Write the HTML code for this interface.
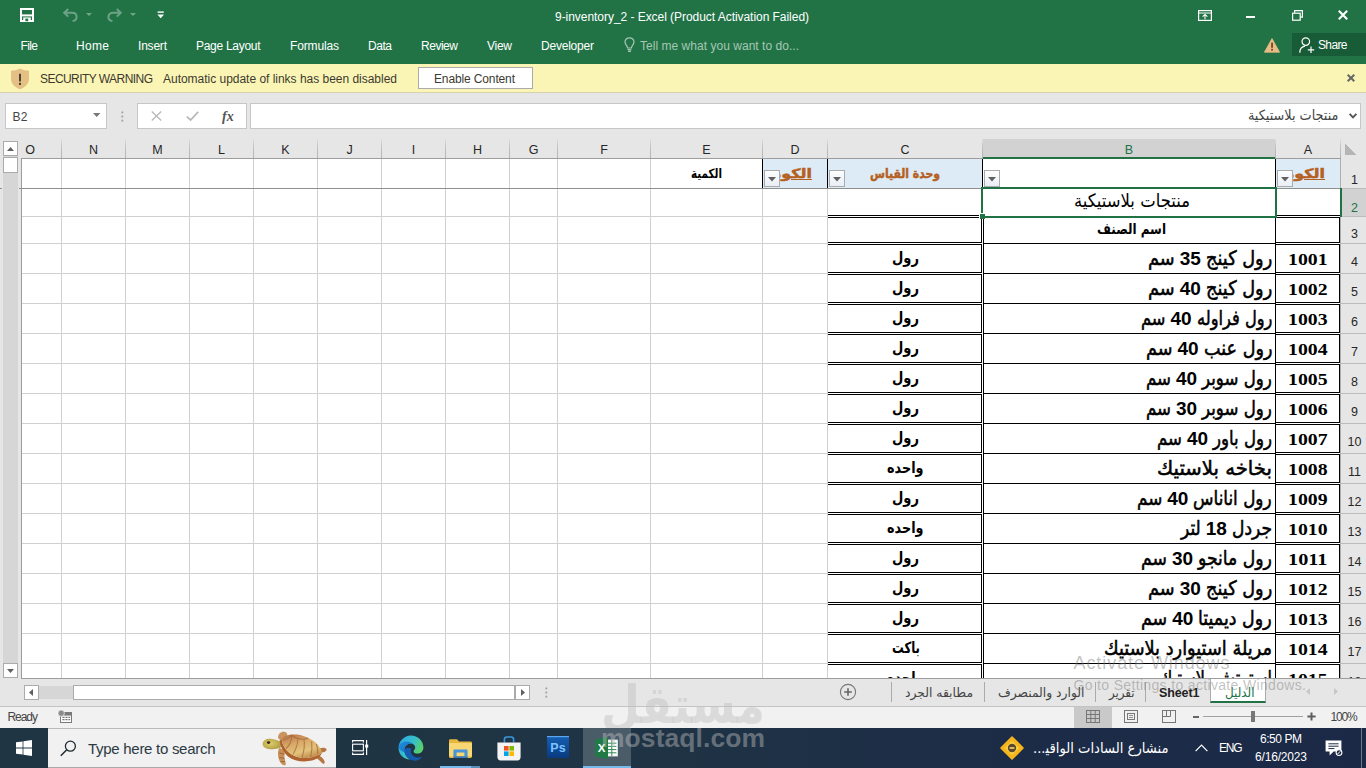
<!DOCTYPE html>
<html lang="en">
<head>
<meta charset="utf-8">
<title>9-inventory_2 - Excel (Product Activation Failed)</title>
<style>
html,body{margin:0;padding:0}
body{width:1366px;height:768px;overflow:hidden;position:relative;background:#e6e6e6;font-family:"Liberation Sans","DejaVu Sans",sans-serif}
.a{position:absolute}
.t{position:absolute;white-space:pre;margin:0;padding:0}
svg{position:absolute;overflow:visible}
#green{left:0;top:0;width:1366px;height:64px;background:#217346}
#share{left:1292px;top:33px;width:74px;height:23px;background:#185c37}
#sec{left:0;top:64px;width:1366px;height:28px;background:#fbf5b5;border-bottom:1px solid #d8d3ae}
#enable{left:418px;top:67px;width:113px;height:20px;background:#fff;border:1px solid #ababab}
.box{background:#fff;border:1px solid #c6c6c6;box-sizing:border-box}
#tabbar{left:0;top:679px;width:1366px;height:27px;background:#e6e6e6;border-bottom:1px solid #c3c3c3}
#status{left:0;top:707px;width:1366px;height:21px;background:#f1f1f1}
#task{left:0;top:728px;width:1366px;height:40px;background:linear-gradient(90deg,#1f3543 0%,#1f3444 45%,#1c2c47 75%,#1b2946 100%)}
#search{left:48px;top:728px;width:288px;height:40px;background:#f1f1f1;border-top:1px solid #b9b9b9;border-bottom:1px solid #a9a9a9;box-sizing:border-box}
</style>
</head>
<body>
<!-- ================= TITLE BAR + RIBBON TABS ================= -->
<div id="green" class="a"></div>
<div id="share" class="a"></div>
<!-- ================= SECURITY WARNING ================= -->
<div id="sec" class="a"></div>
<div id="enable" class="a"></div>
<!-- ================= FORMULA BAR ================= -->
<div class="a box" style="left:5px;top:103px;width:102px;height:26px"></div>
<div class="a box" style="left:137px;top:103px;width:110px;height:26px"></div>
<div class="a box" style="left:250px;top:103px;width:1111px;height:26px"></div>
<!-- save -->
<svg width="14" height="14" viewBox="0 0 14 14" style="left:20px;top:8px"><path d="M1 1H13V13H1Z" fill="none" stroke="#fff" stroke-width="2"/><rect x="1" y="6.4" width="12" height="2" fill="#fff"/><rect x="3.2" y="9.4" width="7.6" height="4" fill="#fff"/><rect x="5.4" y="10.6" width="2.8" height="2.6" fill="#217346"/></svg>
<!-- undo / redo (disabled) -->
<svg width="15" height="14" viewBox="0 0 15 14" style="left:63px;top:8px"><path d="M5.2 1 L1.2 4.8 L5.2 8.6 M1.6 4.8 H9 C12 4.8 13.6 6.8 13.6 9 C13.6 11.2 12 12.8 9.6 13" fill="none" stroke="#fff" stroke-opacity=".34" stroke-width="2"/></svg>
<svg width="6" height="3" viewBox="0 0 6 3" style="left:86px;top:13px"><path d="M0 0H6L3 3Z" fill="#fff" fill-opacity=".36"/></svg>
<svg width="15" height="14" viewBox="0 0 15 14" style="left:107px;top:8px"><path d="M9.8 1 L13.8 4.8 L9.8 8.6 M13.4 4.8 H6 C3 4.8 1.4 6.8 1.4 9 C1.4 11.2 3 12.8 5.4 13" fill="none" stroke="#fff" stroke-opacity=".34" stroke-width="2"/></svg>
<svg width="6" height="3" viewBox="0 0 6 3" style="left:130px;top:13px"><path d="M0 0H6L3 3Z" fill="#fff" fill-opacity=".36"/></svg>
<!-- customize QAT -->
<svg width="8" height="8" viewBox="0 0 8 8" style="left:157px;top:11px"><rect x="0.6" y="0.4" width="6.2" height="1.4" fill="#fff"/><path d="M0.4 3.6H7L3.7 7.2Z" fill="#fff"/></svg>
<!-- lightbulb -->
<svg width="11" height="16" viewBox="0 0 11 16" style="left:623.5px;top:37px"><path d="M5.5 0.8C2.9 0.8 1 2.7 1 5.1C1 6.7 1.9 7.8 2.8 8.9C3.3 9.6 3.5 10.2 3.5 11H7.5C7.5 10.2 7.7 9.6 8.2 8.9C9.1 7.8 10 6.7 10 5.1C10 2.7 8.1 0.8 5.5 0.8Z" fill="none" stroke="#a6c7b4" stroke-width="1.2"/><path d="M3.6 12.6H7.4M4 14.4H7" stroke="#a6c7b4" stroke-width="1.1"/></svg>
<!-- ribbon display options -->
<svg width="14" height="11" viewBox="0 0 14 11" style="left:1198px;top:10px"><rect x="0.6" y="0.6" width="12.8" height="9.8" fill="none" stroke="#fff" stroke-width="1.2"/><path d="M0.6 3H13.4" stroke="#fff" stroke-width="1"/><path d="M7 4.4V9.2M4.6 6.6L7 4.4L9.4 6.6" fill="none" stroke="#fff" stroke-width="1.1"/></svg>
<!-- minimize -->
<div class="a" style="left:1246px;top:16px;width:9px;height:2px;background:#fff"></div>
<!-- restore -->
<svg width="11" height="11" viewBox="0 0 11 11" style="left:1292px;top:10px"><path d="M2.6 2.8V0.6H10.4V7.2H8.2" fill="none" stroke="#fff" stroke-width="1.2"/><rect x="0.6" y="3.2" width="7.6" height="7" fill="none" stroke="#fff" stroke-width="1.2"/></svg>
<!-- close -->
<svg width="10" height="10" viewBox="0 0 10 10" style="left:1338px;top:10px"><path d="M0.8 0.8L9.2 9.2M9.2 0.8L0.8 9.2" stroke="#fff" stroke-width="2.1"/></svg>
<!-- warning triangle -->
<svg width="16" height="15" viewBox="0 0 16 15" style="left:1264px;top:38px"><path d="M8 0.6L15.6 14.2H0.4Z" fill="#e6bd86" stroke="#e6bd86" stroke-width="0.8" stroke-linejoin="round"/><rect x="7.2" y="4.6" width="1.7" height="5.2" fill="#7a3b1e"/><rect x="7.2" y="10.8" width="1.7" height="1.8" fill="#7a3b1e"/></svg>
<!-- share person -->
<svg width="16" height="17" viewBox="0 0 16 17" style="left:1298.5px;top:36.5px"><circle cx="6.8" cy="4.6" r="3.8" fill="none" stroke="#fff" stroke-width="1.2"/><path d="M0.8 15.8C0.8 11.8 3.2 9.6 6 9.2" fill="none" stroke="#fff" stroke-width="1.2"/><path d="M12 9.6V16M8.8 12.8H15.2" stroke="#fff" stroke-width="1.2"/></svg>
<!-- security shield -->
<svg width="20" height="22" viewBox="0 0 20 22" style="left:10px;top:68px"><path d="M10 0.6C7 2.2 4 2.8 1 2.8V10.4C1 15.6 5 19.4 10 21.2C15 19.4 19 15.6 19 10.4V2.8C16 2.8 13 2.2 10 0.6Z" fill="#e4c084"/><rect x="9" y="5.8" width="2" height="7.6" fill="#4f4336"/><rect x="9" y="14.8" width="2" height="2.2" fill="#4f4336"/></svg>
<!-- security close -->
<svg width="8" height="8" viewBox="0 0 8 8" style="left:1347px;top:74px"><path d="M0.7 0.7L7.3 7.3M7.3 0.7L0.7 7.3" stroke="#666" stroke-width="2"/></svg>
<!-- name box arrow -->
<svg width="8" height="4" viewBox="0 0 8 4" style="left:93px;top:113px"><path d="M0 0H7.4L3.7 4Z" fill="#777"/></svg>
<!-- grip dots -->
<svg width="3" height="11" viewBox="0 0 3 11" style="left:121px;top:110.5px"><rect x="0.4" y="0.5" width="1.8" height="1.8" fill="#a0a0a0"/><rect x="0.4" y="4.6" width="1.8" height="1.8" fill="#a0a0a0"/><rect x="0.4" y="8.7" width="1.8" height="1.8" fill="#a0a0a0"/></svg>
<!-- cancel / enter -->
<svg width="11" height="10" viewBox="0 0 11 10" style="left:150.5px;top:111px"><path d="M0.8 0.6L10.2 9.4M10.2 0.6L0.8 9.4" stroke="#b9b9b9" stroke-width="1.4"/></svg>
<svg width="13" height="10" viewBox="0 0 13 10" style="left:186px;top:111px"><path d="M0.8 5.6L4.6 9L12.2 0.8" fill="none" stroke="#b9b9b9" stroke-width="1.8"/></svg>
<!-- formula expand chevron -->
<svg width="8" height="6" viewBox="0 0 8 6" style="left:1349px;top:113px"><path d="M0.6 0.8L4 4.4L7.4 0.8" fill="none" stroke="#555" stroke-width="1.9"/></svg>

<!-- ================= GRID ================= -->
<div class="a" style="left:3px;top:141px;width:15px;height:537px;background:#d6d6d6"></div><div class="a box" style="left:3px;top:141px;width:15px;height:15px;border-color:#ababab"></div><svg width="7" height="4" viewBox="0 0 7 4" style="left:7px;top:147px"><path d="M0 4H7L3.5 0Z" fill="#606060"/></svg><div class="a box" style="left:3px;top:157px;width:15px;height:16px;border-color:#ababab"></div><div class="a box" style="left:3px;top:663px;width:15px;height:15px;border-color:#ababab"></div><svg width="7" height="4" viewBox="0 0 7 4" style="left:7px;top:669px"><path d="M0 0H7L3.5 4Z" fill="#606060"/></svg>
<svg width="1366" height="768" viewBox="0 0 1366 768" shape-rendering="crispEdges" style="left:0;top:0">
<defs><linearGradient id="hs" x1="0" y1="0" x2="0" y2="1"><stop offset="0" stop-color="#c0c0c0" stop-opacity="0"/><stop offset="0.45" stop-color="#c0c0c0" stop-opacity="1"/><stop offset="1" stop-color="#b4b4b4"/></linearGradient></defs>
<rect x="983" y="139" width="292" height="19" fill="#d2d2d2"/>
<rect x="22" y="159" width="1318" height="519" fill="#ffffff"/>
<rect x="1341" y="189" width="25" height="27" fill="#d2d2d2"/>
<rect x="763" y="159" width="64" height="29" fill="#ddebf7"/>
<rect x="828" y="159" width="154" height="29" fill="#ddebf7"/>
<rect x="1276" y="159" width="64" height="29" fill="#ddebf7"/>
<rect x="61" y="159" width="1" height="519" fill="#d0d0d0"/>
<rect x="125" y="159" width="1" height="519" fill="#d0d0d0"/>
<rect x="189" y="159" width="1" height="519" fill="#d0d0d0"/>
<rect x="253" y="159" width="1" height="519" fill="#d0d0d0"/>
<rect x="317" y="159" width="1" height="519" fill="#d0d0d0"/>
<rect x="381" y="159" width="1" height="519" fill="#d0d0d0"/>
<rect x="445" y="159" width="1" height="519" fill="#d0d0d0"/>
<rect x="509" y="159" width="1" height="519" fill="#d0d0d0"/>
<rect x="557" y="159" width="1" height="519" fill="#d0d0d0"/>
<rect x="650" y="159" width="1" height="519" fill="#d0d0d0"/>
<rect x="762" y="159" width="1" height="519" fill="#d0d0d0"/>
<rect x="827" y="159" width="1" height="519" fill="#d0d0d0"/>
<rect x="22" y="216" width="806" height="1" fill="#d0d0d0"/>
<rect x="22" y="243" width="806" height="1" fill="#d0d0d0"/>
<rect x="22" y="273" width="806" height="1" fill="#d0d0d0"/>
<rect x="22" y="303" width="806" height="1" fill="#d0d0d0"/>
<rect x="22" y="333" width="806" height="1" fill="#d0d0d0"/>
<rect x="22" y="363" width="806" height="1" fill="#d0d0d0"/>
<rect x="22" y="393" width="806" height="1" fill="#d0d0d0"/>
<rect x="22" y="423" width="806" height="1" fill="#d0d0d0"/>
<rect x="22" y="453" width="806" height="1" fill="#d0d0d0"/>
<rect x="22" y="483" width="806" height="1" fill="#d0d0d0"/>
<rect x="22" y="513" width="806" height="1" fill="#d0d0d0"/>
<rect x="22" y="543" width="806" height="1" fill="#d0d0d0"/>
<rect x="22" y="573" width="806" height="1" fill="#d0d0d0"/>
<rect x="22" y="603" width="806" height="1" fill="#d0d0d0"/>
<rect x="22" y="633" width="806" height="1" fill="#d0d0d0"/>
<rect x="22" y="663" width="806" height="1" fill="#d0d0d0"/>
<rect x="61" y="138" width="1" height="20" fill="url(#hs)"/>
<rect x="125" y="138" width="1" height="20" fill="url(#hs)"/>
<rect x="189" y="138" width="1" height="20" fill="url(#hs)"/>
<rect x="253" y="138" width="1" height="20" fill="url(#hs)"/>
<rect x="317" y="138" width="1" height="20" fill="url(#hs)"/>
<rect x="381" y="138" width="1" height="20" fill="url(#hs)"/>
<rect x="445" y="138" width="1" height="20" fill="url(#hs)"/>
<rect x="509" y="138" width="1" height="20" fill="url(#hs)"/>
<rect x="557" y="138" width="1" height="20" fill="url(#hs)"/>
<rect x="650" y="138" width="1" height="20" fill="url(#hs)"/>
<rect x="762" y="138" width="1" height="20" fill="url(#hs)"/>
<rect x="827" y="138" width="1" height="20" fill="url(#hs)"/>
<rect x="982" y="138" width="1" height="20" fill="url(#hs)"/>
<rect x="1275" y="138" width="1" height="20" fill="url(#hs)"/>
<rect x="1340" y="138" width="1" height="20" fill="url(#hs)"/>
<rect x="1341" y="188" width="25" height="1" fill="#bcbcbc"/>
<rect x="1341" y="216" width="25" height="1" fill="#bcbcbc"/>
<rect x="1341" y="243" width="25" height="1" fill="#bcbcbc"/>
<rect x="1341" y="273" width="25" height="1" fill="#bcbcbc"/>
<rect x="1341" y="303" width="25" height="1" fill="#bcbcbc"/>
<rect x="1341" y="333" width="25" height="1" fill="#bcbcbc"/>
<rect x="1341" y="363" width="25" height="1" fill="#bcbcbc"/>
<rect x="1341" y="393" width="25" height="1" fill="#bcbcbc"/>
<rect x="1341" y="423" width="25" height="1" fill="#bcbcbc"/>
<rect x="1341" y="453" width="25" height="1" fill="#bcbcbc"/>
<rect x="1341" y="483" width="25" height="1" fill="#bcbcbc"/>
<rect x="1341" y="513" width="25" height="1" fill="#bcbcbc"/>
<rect x="1341" y="543" width="25" height="1" fill="#bcbcbc"/>
<rect x="1341" y="573" width="25" height="1" fill="#bcbcbc"/>
<rect x="1341" y="603" width="25" height="1" fill="#bcbcbc"/>
<rect x="1341" y="633" width="25" height="1" fill="#bcbcbc"/>
<rect x="1341" y="663" width="25" height="1" fill="#bcbcbc"/>
<rect x="1340" y="159" width="1" height="519" fill="#b0b0b0"/>
<rect x="21" y="158" width="1320" height="1" fill="#9d9d9d"/>
<rect x="21" y="158" width="1" height="520" fill="#9d9d9d"/>
<rect x="21" y="678" width="1345" height="1" fill="#9d9d9d"/>
<rect x="19" y="188" width="1321" height="1" fill="#8f8f8f"/>
<rect x="0" y="188" width="2" height="1" fill="#8f8f8f"/>
<rect x="762" y="159" width="1" height="29" fill="#000000"/>
<rect x="827" y="159" width="1" height="29" fill="#000000"/>
<rect x="982" y="159" width="1" height="29" fill="#000000"/>
<rect x="1275" y="159" width="1" height="29" fill="#000000"/>
<rect x="828" y="215" width="153" height="1" fill="#000000"/>
<rect x="828" y="217" width="153" height="1" fill="#000000"/>
<rect x="1276" y="215" width="64" height="1" fill="#000000"/>
<rect x="1276" y="217" width="64" height="1" fill="#000000"/>
<rect x="828" y="216" width="153" height="1" fill="#fff"/>
<rect x="1276" y="216" width="64" height="1" fill="#fff"/>
<rect x="828" y="242" width="153" height="1" fill="#000000"/>
<rect x="828" y="244" width="153" height="1" fill="#000000"/>
<rect x="1276" y="242" width="64" height="1" fill="#000000"/>
<rect x="1276" y="244" width="64" height="1" fill="#000000"/>
<rect x="984" y="243" width="291" height="1" fill="#000000"/>
<rect x="828" y="243" width="153" height="1" fill="#fff"/>
<rect x="1276" y="243" width="64" height="1" fill="#fff"/>
<rect x="828" y="272" width="153" height="1" fill="#000000"/>
<rect x="828" y="274" width="153" height="1" fill="#000000"/>
<rect x="1276" y="272" width="64" height="1" fill="#000000"/>
<rect x="1276" y="274" width="64" height="1" fill="#000000"/>
<rect x="984" y="273" width="291" height="1" fill="#000000"/>
<rect x="828" y="273" width="153" height="1" fill="#fff"/>
<rect x="1276" y="273" width="64" height="1" fill="#fff"/>
<rect x="828" y="302" width="153" height="1" fill="#000000"/>
<rect x="828" y="304" width="153" height="1" fill="#000000"/>
<rect x="1276" y="302" width="64" height="1" fill="#000000"/>
<rect x="1276" y="304" width="64" height="1" fill="#000000"/>
<rect x="984" y="303" width="291" height="1" fill="#000000"/>
<rect x="828" y="303" width="153" height="1" fill="#fff"/>
<rect x="1276" y="303" width="64" height="1" fill="#fff"/>
<rect x="828" y="332" width="153" height="1" fill="#000000"/>
<rect x="828" y="334" width="153" height="1" fill="#000000"/>
<rect x="1276" y="332" width="64" height="1" fill="#000000"/>
<rect x="1276" y="334" width="64" height="1" fill="#000000"/>
<rect x="984" y="333" width="291" height="1" fill="#000000"/>
<rect x="828" y="333" width="153" height="1" fill="#fff"/>
<rect x="1276" y="333" width="64" height="1" fill="#fff"/>
<rect x="828" y="362" width="153" height="1" fill="#000000"/>
<rect x="828" y="364" width="153" height="1" fill="#000000"/>
<rect x="1276" y="362" width="64" height="1" fill="#000000"/>
<rect x="1276" y="364" width="64" height="1" fill="#000000"/>
<rect x="984" y="363" width="291" height="1" fill="#000000"/>
<rect x="828" y="363" width="153" height="1" fill="#fff"/>
<rect x="1276" y="363" width="64" height="1" fill="#fff"/>
<rect x="828" y="392" width="153" height="1" fill="#000000"/>
<rect x="828" y="394" width="153" height="1" fill="#000000"/>
<rect x="1276" y="392" width="64" height="1" fill="#000000"/>
<rect x="1276" y="394" width="64" height="1" fill="#000000"/>
<rect x="984" y="393" width="291" height="1" fill="#000000"/>
<rect x="828" y="393" width="153" height="1" fill="#fff"/>
<rect x="1276" y="393" width="64" height="1" fill="#fff"/>
<rect x="828" y="422" width="153" height="1" fill="#000000"/>
<rect x="828" y="424" width="153" height="1" fill="#000000"/>
<rect x="1276" y="422" width="64" height="1" fill="#000000"/>
<rect x="1276" y="424" width="64" height="1" fill="#000000"/>
<rect x="984" y="423" width="291" height="1" fill="#000000"/>
<rect x="828" y="423" width="153" height="1" fill="#fff"/>
<rect x="1276" y="423" width="64" height="1" fill="#fff"/>
<rect x="828" y="452" width="153" height="1" fill="#000000"/>
<rect x="828" y="454" width="153" height="1" fill="#000000"/>
<rect x="1276" y="452" width="64" height="1" fill="#000000"/>
<rect x="1276" y="454" width="64" height="1" fill="#000000"/>
<rect x="984" y="453" width="291" height="1" fill="#000000"/>
<rect x="828" y="453" width="153" height="1" fill="#fff"/>
<rect x="1276" y="453" width="64" height="1" fill="#fff"/>
<rect x="828" y="482" width="153" height="1" fill="#000000"/>
<rect x="828" y="484" width="153" height="1" fill="#000000"/>
<rect x="1276" y="482" width="64" height="1" fill="#000000"/>
<rect x="1276" y="484" width="64" height="1" fill="#000000"/>
<rect x="984" y="483" width="291" height="1" fill="#000000"/>
<rect x="828" y="483" width="153" height="1" fill="#fff"/>
<rect x="1276" y="483" width="64" height="1" fill="#fff"/>
<rect x="828" y="512" width="153" height="1" fill="#000000"/>
<rect x="828" y="514" width="153" height="1" fill="#000000"/>
<rect x="1276" y="512" width="64" height="1" fill="#000000"/>
<rect x="1276" y="514" width="64" height="1" fill="#000000"/>
<rect x="984" y="513" width="291" height="1" fill="#000000"/>
<rect x="828" y="513" width="153" height="1" fill="#fff"/>
<rect x="1276" y="513" width="64" height="1" fill="#fff"/>
<rect x="828" y="542" width="153" height="1" fill="#000000"/>
<rect x="828" y="544" width="153" height="1" fill="#000000"/>
<rect x="1276" y="542" width="64" height="1" fill="#000000"/>
<rect x="1276" y="544" width="64" height="1" fill="#000000"/>
<rect x="984" y="543" width="291" height="1" fill="#000000"/>
<rect x="828" y="543" width="153" height="1" fill="#fff"/>
<rect x="1276" y="543" width="64" height="1" fill="#fff"/>
<rect x="828" y="572" width="153" height="1" fill="#000000"/>
<rect x="828" y="574" width="153" height="1" fill="#000000"/>
<rect x="1276" y="572" width="64" height="1" fill="#000000"/>
<rect x="1276" y="574" width="64" height="1" fill="#000000"/>
<rect x="984" y="573" width="291" height="1" fill="#000000"/>
<rect x="828" y="573" width="153" height="1" fill="#fff"/>
<rect x="1276" y="573" width="64" height="1" fill="#fff"/>
<rect x="828" y="602" width="153" height="1" fill="#000000"/>
<rect x="828" y="604" width="153" height="1" fill="#000000"/>
<rect x="1276" y="602" width="64" height="1" fill="#000000"/>
<rect x="1276" y="604" width="64" height="1" fill="#000000"/>
<rect x="984" y="603" width="291" height="1" fill="#000000"/>
<rect x="828" y="603" width="153" height="1" fill="#fff"/>
<rect x="1276" y="603" width="64" height="1" fill="#fff"/>
<rect x="828" y="632" width="153" height="1" fill="#000000"/>
<rect x="828" y="634" width="153" height="1" fill="#000000"/>
<rect x="1276" y="632" width="64" height="1" fill="#000000"/>
<rect x="1276" y="634" width="64" height="1" fill="#000000"/>
<rect x="984" y="633" width="291" height="1" fill="#000000"/>
<rect x="828" y="633" width="153" height="1" fill="#fff"/>
<rect x="1276" y="633" width="64" height="1" fill="#fff"/>
<rect x="828" y="662" width="153" height="1" fill="#000000"/>
<rect x="828" y="664" width="153" height="1" fill="#000000"/>
<rect x="1276" y="662" width="64" height="1" fill="#000000"/>
<rect x="1276" y="664" width="64" height="1" fill="#000000"/>
<rect x="984" y="663" width="291" height="1" fill="#000000"/>
<rect x="828" y="663" width="153" height="1" fill="#fff"/>
<rect x="1276" y="663" width="64" height="1" fill="#fff"/>
<rect x="981" y="217" width="1" height="461" fill="#000000"/>
<rect x="983" y="217" width="1" height="461" fill="#000000"/>
<rect x="982" y="217" width="1" height="461" fill="#fff"/>
<rect x="1275" y="217" width="1" height="461" fill="#000000"/>
<rect x="1339" y="217" width="1" height="461" fill="#000000"/>
<rect x="981" y="216" width="1" height="1" fill="#fff"/>
<rect x="1339" y="216" width="1" height="1" fill="#fff"/>
<rect x="981" y="243" width="1" height="1" fill="#fff"/>
<rect x="1339" y="243" width="1" height="1" fill="#fff"/>
<rect x="981" y="273" width="1" height="1" fill="#fff"/>
<rect x="1339" y="273" width="1" height="1" fill="#fff"/>
<rect x="981" y="303" width="1" height="1" fill="#fff"/>
<rect x="1339" y="303" width="1" height="1" fill="#fff"/>
<rect x="981" y="333" width="1" height="1" fill="#fff"/>
<rect x="1339" y="333" width="1" height="1" fill="#fff"/>
<rect x="981" y="363" width="1" height="1" fill="#fff"/>
<rect x="1339" y="363" width="1" height="1" fill="#fff"/>
<rect x="981" y="393" width="1" height="1" fill="#fff"/>
<rect x="1339" y="393" width="1" height="1" fill="#fff"/>
<rect x="981" y="423" width="1" height="1" fill="#fff"/>
<rect x="1339" y="423" width="1" height="1" fill="#fff"/>
<rect x="981" y="453" width="1" height="1" fill="#fff"/>
<rect x="1339" y="453" width="1" height="1" fill="#fff"/>
<rect x="981" y="483" width="1" height="1" fill="#fff"/>
<rect x="1339" y="483" width="1" height="1" fill="#fff"/>
<rect x="981" y="513" width="1" height="1" fill="#fff"/>
<rect x="1339" y="513" width="1" height="1" fill="#fff"/>
<rect x="981" y="543" width="1" height="1" fill="#fff"/>
<rect x="1339" y="543" width="1" height="1" fill="#fff"/>
<rect x="981" y="573" width="1" height="1" fill="#fff"/>
<rect x="1339" y="573" width="1" height="1" fill="#fff"/>
<rect x="981" y="603" width="1" height="1" fill="#fff"/>
<rect x="1339" y="603" width="1" height="1" fill="#fff"/>
<rect x="981" y="633" width="1" height="1" fill="#fff"/>
<rect x="1339" y="633" width="1" height="1" fill="#fff"/>
<rect x="981" y="663" width="1" height="1" fill="#fff"/>
<rect x="1339" y="663" width="1" height="1" fill="#fff"/>
<rect x="983" y="157" width="292" height="2" fill="#217346"/>
<rect x="981" y="187" width="296" height="2" fill="#217346"/>
<rect x="981" y="216" width="296" height="2" fill="#217346"/>
<rect x="981" y="187" width="2" height="31" fill="#217346"/>
<rect x="1275" y="187" width="2" height="31" fill="#217346"/>
<rect x="1340" y="188" width="2" height="29" fill="#217346"/>
<rect x="979" y="213" width="6" height="6" fill="#fff"/>
<rect x="980" y="214" width="5" height="5" fill="#217346"/>
<path d="M1345 144 L1345 155 L1356 155 Z" fill="#b5b5b5"/>
</svg>
<div class="a" style="left:0;top:0;width:1366px;height:678px;overflow:hidden">
<div class="t" style='top:144px;font-family:"Liberation Sans","DejaVu Sans",sans-serif;font-size:12.5px;line-height:12.5px;color:#262626;left:25.13px;'>O</div>
<div class="t" style='top:144px;font-family:"Liberation Sans","DejaVu Sans",sans-serif;font-size:12.5px;line-height:12.5px;color:#262626;left:88.98px;'>N</div>
<div class="t" style='top:144px;font-family:"Liberation Sans","DejaVu Sans",sans-serif;font-size:12.5px;line-height:12.5px;color:#262626;left:152.29px;'>M</div>
<div class="t" style='top:144px;font-family:"Liberation Sans","DejaVu Sans",sans-serif;font-size:12.5px;line-height:12.5px;color:#262626;left:218.02px;'>L</div>
<div class="t" style='top:144px;font-family:"Liberation Sans","DejaVu Sans",sans-serif;font-size:12.5px;line-height:12.5px;color:#262626;left:281.33px;'>K</div>
<div class="t" style='top:144px;font-family:"Liberation Sans","DejaVu Sans",sans-serif;font-size:12.5px;line-height:12.5px;color:#262626;left:346.38px;'>J</div>
<div class="t" style='top:144px;font-family:"Liberation Sans","DejaVu Sans",sans-serif;font-size:12.5px;line-height:12.5px;color:#262626;left:411.76px;'>I</div>
<div class="t" style='top:144px;font-family:"Liberation Sans","DejaVu Sans",sans-serif;font-size:12.5px;line-height:12.5px;color:#262626;left:472.98px;'>H</div>
<div class="t" style='top:144px;font-family:"Liberation Sans","DejaVu Sans",sans-serif;font-size:12.5px;line-height:12.5px;color:#262626;left:528.63px;'>G</div>
<div class="t" style='top:144px;font-family:"Liberation Sans","DejaVu Sans",sans-serif;font-size:12.5px;line-height:12.5px;color:#262626;left:600.18px;'>F</div>
<div class="t" style='top:144px;font-family:"Liberation Sans","DejaVu Sans",sans-serif;font-size:12.5px;line-height:12.5px;color:#262626;left:702.33px;'>E</div>
<div class="t" style='top:144px;font-family:"Liberation Sans","DejaVu Sans",sans-serif;font-size:12.5px;line-height:12.5px;color:#262626;left:790.48px;'>D</div>
<div class="t" style='top:144px;font-family:"Liberation Sans","DejaVu Sans",sans-serif;font-size:12.5px;line-height:12.5px;color:#262626;left:900.48px;'>C</div>
<div class="t" style='top:144px;font-family:"Liberation Sans","DejaVu Sans",sans-serif;font-size:12.5px;line-height:12.5px;color:#217346;left:1124.83px;'>B</div>
<div class="t" style='top:144px;font-family:"Liberation Sans","DejaVu Sans",sans-serif;font-size:12.5px;line-height:12.5px;color:#262626;left:1303.83px;'>A</div>
<div class="t" style='top:174px;font-family:"Liberation Sans","DejaVu Sans",sans-serif;font-size:12.5px;line-height:12.5px;color:#262626;left:1351.02px;'>1</div>
<div class="t" style='top:202px;font-family:"Liberation Sans","DejaVu Sans",sans-serif;font-size:12.5px;line-height:12.5px;color:#217346;left:1351.02px;'>2</div>
<div class="t" style='top:228px;font-family:"Liberation Sans","DejaVu Sans",sans-serif;font-size:12.5px;line-height:12.5px;color:#262626;left:1351.02px;'>3</div>
<div class="t" style='top:256px;font-family:"Liberation Sans","DejaVu Sans",sans-serif;font-size:12.5px;line-height:12.5px;color:#262626;left:1351.02px;'>4</div>
<div class="t" style='top:286px;font-family:"Liberation Sans","DejaVu Sans",sans-serif;font-size:12.5px;line-height:12.5px;color:#262626;left:1351.02px;'>5</div>
<div class="t" style='top:316px;font-family:"Liberation Sans","DejaVu Sans",sans-serif;font-size:12.5px;line-height:12.5px;color:#262626;left:1351.02px;'>6</div>
<div class="t" style='top:346px;font-family:"Liberation Sans","DejaVu Sans",sans-serif;font-size:12.5px;line-height:12.5px;color:#262626;left:1351.02px;'>7</div>
<div class="t" style='top:376px;font-family:"Liberation Sans","DejaVu Sans",sans-serif;font-size:12.5px;line-height:12.5px;color:#262626;left:1351.02px;'>8</div>
<div class="t" style='top:406px;font-family:"Liberation Sans","DejaVu Sans",sans-serif;font-size:12.5px;line-height:12.5px;color:#262626;left:1351.02px;'>9</div>
<div class="t" style='top:436px;font-family:"Liberation Sans","DejaVu Sans",sans-serif;font-size:12.5px;line-height:12.5px;color:#262626;left:1347.55px;'>10</div>
<div class="t" style='top:466px;font-family:"Liberation Sans","DejaVu Sans",sans-serif;font-size:12.5px;line-height:12.5px;color:#262626;left:1348.01px;'>11</div>
<div class="t" style='top:496px;font-family:"Liberation Sans","DejaVu Sans",sans-serif;font-size:12.5px;line-height:12.5px;color:#262626;left:1347.55px;'>12</div>
<div class="t" style='top:526px;font-family:"Liberation Sans","DejaVu Sans",sans-serif;font-size:12.5px;line-height:12.5px;color:#262626;left:1347.55px;'>13</div>
<div class="t" style='top:556px;font-family:"Liberation Sans","DejaVu Sans",sans-serif;font-size:12.5px;line-height:12.5px;color:#262626;left:1347.55px;'>14</div>
<div class="t" style='top:586px;font-family:"Liberation Sans","DejaVu Sans",sans-serif;font-size:12.5px;line-height:12.5px;color:#262626;left:1347.55px;'>15</div>
<div class="t" style='top:616px;font-family:"Liberation Sans","DejaVu Sans",sans-serif;font-size:12.5px;line-height:12.5px;color:#262626;left:1347.55px;'>16</div>
<div class="t" style='top:646px;font-family:"Liberation Sans","DejaVu Sans",sans-serif;font-size:12.5px;line-height:12.5px;color:#262626;left:1347.55px;'>17</div>
<div class="t" style='top:676px;font-family:"Liberation Sans","DejaVu Sans",sans-serif;font-size:12.5px;line-height:12.5px;color:#262626;left:1347.55px;'>18</div>
<div class="t" dir="rtl" style='top:167px;font-family:"DejaVu Sans","Liberation Sans",sans-serif;font-size:13px;line-height:13px;color:#b5601f;font-weight:bold;left:1286.00px;width:31.73px;transform:scaleX(1.2290);transform-origin:0 0;text-decoration:underline;-webkit-text-stroke:0.5px #b5601f;'>الكود</div>
<div class="t" dir="rtl" style='top:167px;font-family:"DejaVu Sans","Liberation Sans",sans-serif;font-size:13px;line-height:13px;color:#b5601f;font-weight:bold;left:870.00px;width:83.98px;transform:scaleX(0.8335);transform-origin:0 0;-webkit-text-stroke:0.5px #b5601f;'>وحدة القياس</div>
<div class="t" dir="rtl" style='top:167px;font-family:"DejaVu Sans","Liberation Sans",sans-serif;font-size:13px;line-height:13px;color:#b5601f;font-weight:bold;left:773.00px;width:31.73px;transform:scaleX(1.2290);transform-origin:0 0;text-decoration:underline;-webkit-text-stroke:0.5px #b5601f;'>الكود</div>
<div class="t" dir="rtl" style='top:167px;font-family:"DejaVu Sans","Liberation Sans",sans-serif;font-size:13px;line-height:13px;color:#000;font-weight:bold;left:690.50px;width:38.81px;transform:scaleX(0.7987);transform-origin:0 0;'>الكمية</div>
<div class="t" dir="rtl" style='top:192px;font-family:"DejaVu Sans","Liberation Sans",sans-serif;font-size:18.5px;line-height:18.5px;color:#000;left:1074.00px;width:130.53px;transform:scaleX(0.8887);transform-origin:0 0;'>منتجات بلاستيكية</div>
<div class="t" dir="rtl" style='top:222px;font-family:"DejaVu Sans","Liberation Sans",sans-serif;font-size:15px;line-height:15px;color:#000;font-weight:bold;left:1097.00px;width:86.42px;transform:scaleX(0.7984);transform-origin:0 0;'>اسم الصنف</div>
<div class="t" dir="rtl" style='top:248px;font-family:"DejaVu Sans","Liberation Sans",sans-serif;font-size:20px;line-height:20px;color:#000;left:1205.79px;width:74.72px;transform:scaleX(0.8861);transform-origin:0 0;-webkit-text-stroke:0.55px #000;'>رول كينج</div>
<div class="t" style='top:249px;font-family:"Liberation Sans","DejaVu Sans",sans-serif;font-size:19px;line-height:19px;color:#000;font-weight:bold;left:1179.65px;'>35</div>
<div class="t" dir="rtl" style='top:248px;font-family:"DejaVu Sans","Liberation Sans",sans-serif;font-size:20px;line-height:20px;color:#000;left:1148.00px;width:30.08px;transform:scaleX(0.8861);transform-origin:0 0;-webkit-text-stroke:0.55px #000;'>سم</div>
<div class="t" dir="rtl" style='top:278px;font-family:"DejaVu Sans","Liberation Sans",sans-serif;font-size:20px;line-height:20px;color:#000;left:1205.79px;width:74.72px;transform:scaleX(0.8861);transform-origin:0 0;-webkit-text-stroke:0.55px #000;'>رول كينج</div>
<div class="t" style='top:279px;font-family:"Liberation Sans","DejaVu Sans",sans-serif;font-size:19px;line-height:19px;color:#000;font-weight:bold;left:1179.65px;'>40</div>
<div class="t" dir="rtl" style='top:278px;font-family:"DejaVu Sans","Liberation Sans",sans-serif;font-size:20px;line-height:20px;color:#000;left:1148.00px;width:30.08px;transform:scaleX(0.8861);transform-origin:0 0;-webkit-text-stroke:0.55px #000;'>سم</div>
<div class="t" dir="rtl" style='top:308px;font-family:"DejaVu Sans","Liberation Sans",sans-serif;font-size:20px;line-height:20px;color:#000;left:1196.58px;width:92.84px;transform:scaleX(0.8124);transform-origin:0 0;-webkit-text-stroke:0.55px #000;'>رول فراوله</div>
<div class="t" style='top:309px;font-family:"Liberation Sans","DejaVu Sans",sans-serif;font-size:19px;line-height:19px;color:#000;font-weight:bold;left:1170.43px;'>40</div>
<div class="t" dir="rtl" style='top:308px;font-family:"DejaVu Sans","Liberation Sans",sans-serif;font-size:20px;line-height:20px;color:#000;left:1141.00px;width:30.08px;transform:scaleX(0.8124);transform-origin:0 0;-webkit-text-stroke:0.55px #000;'>سم</div>
<div class="t" dir="rtl" style='top:338px;font-family:"DejaVu Sans","Liberation Sans",sans-serif;font-size:20px;line-height:20px;color:#000;left:1203.59px;width:77.81px;transform:scaleX(0.8792);transform-origin:0 0;-webkit-text-stroke:0.55px #000;'>رول عنب</div>
<div class="t" style='top:339px;font-family:"Liberation Sans","DejaVu Sans",sans-serif;font-size:19px;line-height:19px;color:#000;font-weight:bold;left:1177.45px;'>40</div>
<div class="t" dir="rtl" style='top:338px;font-family:"DejaVu Sans","Liberation Sans",sans-serif;font-size:20px;line-height:20px;color:#000;left:1146.00px;width:30.08px;transform:scaleX(0.8792);transform-origin:0 0;-webkit-text-stroke:0.55px #000;'>سم</div>
<div class="t" dir="rtl" style='top:368px;font-family:"DejaVu Sans","Liberation Sans",sans-serif;font-size:20px;line-height:20px;color:#000;left:1202.17px;width:83.91px;transform:scaleX(0.8322);transform-origin:0 0;-webkit-text-stroke:0.55px #000;'>رول سوبر</div>
<div class="t" style='top:369px;font-family:"Liberation Sans","DejaVu Sans",sans-serif;font-size:19px;line-height:19px;color:#000;font-weight:bold;left:1176.03px;'>40</div>
<div class="t" dir="rtl" style='top:368px;font-family:"DejaVu Sans","Liberation Sans",sans-serif;font-size:20px;line-height:20px;color:#000;left:1146.00px;width:30.08px;transform:scaleX(0.8322);transform-origin:0 0;-webkit-text-stroke:0.55px #000;'>سم</div>
<div class="t" dir="rtl" style='top:398px;font-family:"DejaVu Sans","Liberation Sans",sans-serif;font-size:20px;line-height:20px;color:#000;left:1202.17px;width:83.91px;transform:scaleX(0.8322);transform-origin:0 0;-webkit-text-stroke:0.55px #000;'>رول سوبر</div>
<div class="t" style='top:399px;font-family:"Liberation Sans","DejaVu Sans",sans-serif;font-size:19px;line-height:19px;color:#000;font-weight:bold;left:1176.03px;'>30</div>
<div class="t" dir="rtl" style='top:398px;font-family:"DejaVu Sans","Liberation Sans",sans-serif;font-size:20px;line-height:20px;color:#000;left:1146.00px;width:30.08px;transform:scaleX(0.8322);transform-origin:0 0;-webkit-text-stroke:0.55px #000;'>سم</div>
<div class="t" dir="rtl" style='top:428px;font-family:"DejaVu Sans","Liberation Sans",sans-serif;font-size:20px;line-height:20px;color:#000;left:1213.05px;width:71.19px;transform:scaleX(0.8281);transform-origin:0 0;-webkit-text-stroke:0.55px #000;'>رول باور</div>
<div class="t" style='top:429px;font-family:"Liberation Sans","DejaVu Sans",sans-serif;font-size:19px;line-height:19px;color:#000;font-weight:bold;left:1186.91px;'>40</div>
<div class="t" dir="rtl" style='top:428px;font-family:"DejaVu Sans","Liberation Sans",sans-serif;font-size:20px;line-height:20px;color:#000;left:1157.00px;width:30.08px;transform:scaleX(0.8281);transform-origin:0 0;-webkit-text-stroke:0.55px #000;'>سم</div>
<div class="t" dir="rtl" style='top:458px;font-family:"DejaVu Sans","Liberation Sans",sans-serif;font-size:20px;line-height:20px;color:#000;left:1157.00px;width:117.20px;transform:scaleX(0.9812);transform-origin:0 0;-webkit-text-stroke:0.55px #000;'>بخاخه بلاستيك</div>
<div class="t" dir="rtl" style='top:488px;font-family:"DejaVu Sans","Liberation Sans",sans-serif;font-size:20px;line-height:20px;color:#000;left:1193.42px;width:93.50px;transform:scaleX(0.8404);transform-origin:0 0;-webkit-text-stroke:0.55px #000;'>رول اناناس</div>
<div class="t" style='top:489px;font-family:"Liberation Sans","DejaVu Sans",sans-serif;font-size:19px;line-height:19px;color:#000;font-weight:bold;left:1167.28px;'>40</div>
<div class="t" dir="rtl" style='top:488px;font-family:"DejaVu Sans","Liberation Sans",sans-serif;font-size:20px;line-height:20px;color:#000;left:1137.00px;width:30.08px;transform:scaleX(0.8404);transform-origin:0 0;-webkit-text-stroke:0.55px #000;'>سم</div>
<div class="t" dir="rtl" style='top:518px;font-family:"DejaVu Sans","Liberation Sans",sans-serif;font-size:20px;line-height:20px;color:#000;left:1231.95px;width:46.84px;transform:scaleX(0.8549);transform-origin:0 0;-webkit-text-stroke:0.55px #000;'>جردل</div>
<div class="t" style='top:519px;font-family:"Liberation Sans","DejaVu Sans",sans-serif;font-size:19px;line-height:19px;color:#000;font-weight:bold;left:1205.81px;'>18</div>
<div class="t" dir="rtl" style='top:518px;font-family:"DejaVu Sans","Liberation Sans",sans-serif;font-size:20px;line-height:20px;color:#000;left:1181.00px;width:23.17px;transform:scaleX(0.8549);transform-origin:0 0;-webkit-text-stroke:0.55px #000;'>لتر</div>
<div class="t" dir="rtl" style='top:548px;font-family:"DejaVu Sans","Liberation Sans",sans-serif;font-size:20px;line-height:20px;color:#000;left:1198.05px;width:85.83px;transform:scaleX(0.8616);transform-origin:0 0;-webkit-text-stroke:0.55px #000;'>رول مانجو</div>
<div class="t" style='top:549px;font-family:"Liberation Sans","DejaVu Sans",sans-serif;font-size:19px;line-height:19px;color:#000;font-weight:bold;left:1171.91px;'>30</div>
<div class="t" dir="rtl" style='top:548px;font-family:"DejaVu Sans","Liberation Sans",sans-serif;font-size:20px;line-height:20px;color:#000;left:1141.00px;width:30.08px;transform:scaleX(0.8616);transform-origin:0 0;-webkit-text-stroke:0.55px #000;'>سم</div>
<div class="t" dir="rtl" style='top:578px;font-family:"DejaVu Sans","Liberation Sans",sans-serif;font-size:20px;line-height:20px;color:#000;left:1205.79px;width:74.72px;transform:scaleX(0.8861);transform-origin:0 0;-webkit-text-stroke:0.55px #000;'>رول كينج</div>
<div class="t" style='top:579px;font-family:"Liberation Sans","DejaVu Sans",sans-serif;font-size:19px;line-height:19px;color:#000;font-weight:bold;left:1179.65px;'>30</div>
<div class="t" dir="rtl" style='top:578px;font-family:"DejaVu Sans","Liberation Sans",sans-serif;font-size:20px;line-height:20px;color:#000;left:1148.00px;width:30.08px;transform:scaleX(0.8861);transform-origin:0 0;-webkit-text-stroke:0.55px #000;'>سم</div>
<div class="t" dir="rtl" style='top:608px;font-family:"DejaVu Sans","Liberation Sans",sans-serif;font-size:20px;line-height:20px;color:#000;left:1198.38px;width:84.41px;transform:scaleX(0.8723);transform-origin:0 0;-webkit-text-stroke:0.55px #000;'>رول ديميتا</div>
<div class="t" style='top:609px;font-family:"Liberation Sans","DejaVu Sans",sans-serif;font-size:19px;line-height:19px;color:#000;font-weight:bold;left:1172.24px;'>40</div>
<div class="t" dir="rtl" style='top:608px;font-family:"DejaVu Sans","Liberation Sans",sans-serif;font-size:20px;line-height:20px;color:#000;left:1141.00px;width:30.08px;transform:scaleX(0.8723);transform-origin:0 0;-webkit-text-stroke:0.55px #000;'>سم</div>
<div class="t" dir="rtl" style='top:638px;font-family:"DejaVu Sans","Liberation Sans",sans-serif;font-size:20px;line-height:20px;color:#000;left:1104.00px;width:189.41px;transform:scaleX(0.8870);transform-origin:0 0;-webkit-text-stroke:0.55px #000;'>مريلة استيوارد بلاستيك</div>
<div class="t" dir="rtl" style='top:668px;font-family:"DejaVu Sans","Liberation Sans",sans-serif;font-size:20px;line-height:20px;color:#000;left:1159.00px;width:140.00px;transform:scaleX(0.8071);transform-origin:0 0;-webkit-text-stroke:0.55px #000;'>استرتش بلاستيك</div>
<div class="t" dir="rtl" style='top:251px;font-family:"DejaVu Sans","Liberation Sans",sans-serif;font-size:15.5px;line-height:15.5px;color:#000;font-weight:bold;left:891.50px;width:32.02px;transform:scaleX(0.8433);transform-origin:0 0;'>رول</div>
<div class="t" dir="rtl" style='top:281px;font-family:"DejaVu Sans","Liberation Sans",sans-serif;font-size:15.5px;line-height:15.5px;color:#000;font-weight:bold;left:891.50px;width:32.02px;transform:scaleX(0.8433);transform-origin:0 0;'>رول</div>
<div class="t" dir="rtl" style='top:311px;font-family:"DejaVu Sans","Liberation Sans",sans-serif;font-size:15.5px;line-height:15.5px;color:#000;font-weight:bold;left:891.50px;width:32.02px;transform:scaleX(0.8433);transform-origin:0 0;'>رول</div>
<div class="t" dir="rtl" style='top:341px;font-family:"DejaVu Sans","Liberation Sans",sans-serif;font-size:15.5px;line-height:15.5px;color:#000;font-weight:bold;left:891.50px;width:32.02px;transform:scaleX(0.8433);transform-origin:0 0;'>رول</div>
<div class="t" dir="rtl" style='top:371px;font-family:"DejaVu Sans","Liberation Sans",sans-serif;font-size:15.5px;line-height:15.5px;color:#000;font-weight:bold;left:891.50px;width:32.02px;transform:scaleX(0.8433);transform-origin:0 0;'>رول</div>
<div class="t" dir="rtl" style='top:401px;font-family:"DejaVu Sans","Liberation Sans",sans-serif;font-size:15.5px;line-height:15.5px;color:#000;font-weight:bold;left:891.50px;width:32.02px;transform:scaleX(0.8433);transform-origin:0 0;'>رول</div>
<div class="t" dir="rtl" style='top:431px;font-family:"DejaVu Sans","Liberation Sans",sans-serif;font-size:15.5px;line-height:15.5px;color:#000;font-weight:bold;left:891.50px;width:32.02px;transform:scaleX(0.8433);transform-origin:0 0;'>رول</div>
<div class="t" dir="rtl" style='top:461px;font-family:"DejaVu Sans","Liberation Sans",sans-serif;font-size:15.5px;line-height:15.5px;color:#000;font-weight:bold;left:886.50px;width:44.23px;transform:scaleX(0.8252);transform-origin:0 0;'>واحده</div>
<div class="t" dir="rtl" style='top:491px;font-family:"DejaVu Sans","Liberation Sans",sans-serif;font-size:15.5px;line-height:15.5px;color:#000;font-weight:bold;left:891.50px;width:32.02px;transform:scaleX(0.8433);transform-origin:0 0;'>رول</div>
<div class="t" dir="rtl" style='top:521px;font-family:"DejaVu Sans","Liberation Sans",sans-serif;font-size:15.5px;line-height:15.5px;color:#000;font-weight:bold;left:886.50px;width:44.23px;transform:scaleX(0.8252);transform-origin:0 0;'>واحده</div>
<div class="t" dir="rtl" style='top:551px;font-family:"DejaVu Sans","Liberation Sans",sans-serif;font-size:15.5px;line-height:15.5px;color:#000;font-weight:bold;left:891.50px;width:32.02px;transform:scaleX(0.8433);transform-origin:0 0;'>رول</div>
<div class="t" dir="rtl" style='top:581px;font-family:"DejaVu Sans","Liberation Sans",sans-serif;font-size:15.5px;line-height:15.5px;color:#000;font-weight:bold;left:891.50px;width:32.02px;transform:scaleX(0.8433);transform-origin:0 0;'>رول</div>
<div class="t" dir="rtl" style='top:611px;font-family:"DejaVu Sans","Liberation Sans",sans-serif;font-size:15.5px;line-height:15.5px;color:#000;font-weight:bold;left:891.50px;width:32.02px;transform:scaleX(0.8433);transform-origin:0 0;'>رول</div>
<div class="t" dir="rtl" style='top:641px;font-family:"DejaVu Sans","Liberation Sans",sans-serif;font-size:15.5px;line-height:15.5px;color:#000;font-weight:bold;left:891.50px;width:37.06px;transform:scaleX(0.7555);transform-origin:0 0;'>باكت</div>
<div class="t" dir="rtl" style='top:671px;font-family:"DejaVu Sans","Liberation Sans",sans-serif;font-size:15.5px;line-height:15.5px;color:#000;font-weight:bold;left:886.50px;width:44.23px;transform:scaleX(0.8252);transform-origin:0 0;'>واحده</div>
<div class="t" style='top:251px;font-family:"Liberation Serif","DejaVu Serif",serif;font-size:17.5px;line-height:17.5px;color:#000;font-weight:bold;left:1288.00px;width:35.00px;transform:scaleX(1.1286);transform-origin:0 0;'>1001</div>
<div class="t" style='top:281px;font-family:"Liberation Serif","DejaVu Serif",serif;font-size:17.5px;line-height:17.5px;color:#000;font-weight:bold;left:1288.00px;width:35.00px;transform:scaleX(1.1286);transform-origin:0 0;'>1002</div>
<div class="t" style='top:311px;font-family:"Liberation Serif","DejaVu Serif",serif;font-size:17.5px;line-height:17.5px;color:#000;font-weight:bold;left:1288.00px;width:35.00px;transform:scaleX(1.1286);transform-origin:0 0;'>1003</div>
<div class="t" style='top:341px;font-family:"Liberation Serif","DejaVu Serif",serif;font-size:17.5px;line-height:17.5px;color:#000;font-weight:bold;left:1288.00px;width:35.00px;transform:scaleX(1.1286);transform-origin:0 0;'>1004</div>
<div class="t" style='top:371px;font-family:"Liberation Serif","DejaVu Serif",serif;font-size:17.5px;line-height:17.5px;color:#000;font-weight:bold;left:1288.00px;width:35.00px;transform:scaleX(1.1286);transform-origin:0 0;'>1005</div>
<div class="t" style='top:401px;font-family:"Liberation Serif","DejaVu Serif",serif;font-size:17.5px;line-height:17.5px;color:#000;font-weight:bold;left:1288.00px;width:35.00px;transform:scaleX(1.1286);transform-origin:0 0;'>1006</div>
<div class="t" style='top:431px;font-family:"Liberation Serif","DejaVu Serif",serif;font-size:17.5px;line-height:17.5px;color:#000;font-weight:bold;left:1288.00px;width:35.00px;transform:scaleX(1.1286);transform-origin:0 0;'>1007</div>
<div class="t" style='top:461px;font-family:"Liberation Serif","DejaVu Serif",serif;font-size:17.5px;line-height:17.5px;color:#000;font-weight:bold;left:1288.00px;width:35.00px;transform:scaleX(1.1286);transform-origin:0 0;'>1008</div>
<div class="t" style='top:491px;font-family:"Liberation Serif","DejaVu Serif",serif;font-size:17.5px;line-height:17.5px;color:#000;font-weight:bold;left:1288.00px;width:35.00px;transform:scaleX(1.1286);transform-origin:0 0;'>1009</div>
<div class="t" style='top:521px;font-family:"Liberation Serif","DejaVu Serif",serif;font-size:17.5px;line-height:17.5px;color:#000;font-weight:bold;left:1288.00px;width:35.00px;transform:scaleX(1.1286);transform-origin:0 0;'>1010</div>
<div class="t" style='top:551px;font-family:"Liberation Serif","DejaVu Serif",serif;font-size:17.5px;line-height:17.5px;color:#000;font-weight:bold;left:1288.00px;width:34.05px;transform:scaleX(1.1602);transform-origin:0 0;'>1011</div>
<div class="t" style='top:581px;font-family:"Liberation Serif","DejaVu Serif",serif;font-size:17.5px;line-height:17.5px;color:#000;font-weight:bold;left:1288.00px;width:35.00px;transform:scaleX(1.1286);transform-origin:0 0;'>1012</div>
<div class="t" style='top:611px;font-family:"Liberation Serif","DejaVu Serif",serif;font-size:17.5px;line-height:17.5px;color:#000;font-weight:bold;left:1288.00px;width:35.00px;transform:scaleX(1.1286);transform-origin:0 0;'>1013</div>
<div class="t" style='top:641px;font-family:"Liberation Serif","DejaVu Serif",serif;font-size:17.5px;line-height:17.5px;color:#000;font-weight:bold;left:1288.00px;width:35.00px;transform:scaleX(1.1286);transform-origin:0 0;'>1014</div>
<div class="t" style='top:671px;font-family:"Liberation Serif","DejaVu Serif",serif;font-size:17.5px;line-height:17.5px;color:#000;font-weight:bold;left:1288.00px;width:35.00px;transform:scaleX(1.1286);transform-origin:0 0;'>1015</div>
</div>
<div class="a" style="left:764px;top:170px;width:14px;height:15px;border:1px solid #ababab;background:linear-gradient(#fdfdfe,#e9eef6)"></div><svg width="8" height="5" viewBox="0 0 8 5" style="left:768px;top:177px"><path d="M0 0H8L4 4.6Z" fill="#606060"/></svg>
<div class="a" style="left:829px;top:170px;width:14px;height:15px;border:1px solid #ababab;background:linear-gradient(#fdfdfe,#e9eef6)"></div><svg width="8" height="5" viewBox="0 0 8 5" style="left:833px;top:177px"><path d="M0 0H8L4 4.6Z" fill="#606060"/></svg>
<div class="a" style="left:984px;top:170px;width:14px;height:15px;border:1px solid #ababab;background:linear-gradient(#fdfdfe,#e9eef6)"></div><svg width="8" height="5" viewBox="0 0 8 5" style="left:988px;top:177px"><path d="M0 0H8L4 4.6Z" fill="#606060"/></svg>
<div class="a" style="left:1277px;top:170px;width:14px;height:15px;border:1px solid #ababab;background:linear-gradient(#fdfdfe,#e9eef6)"></div><svg width="8" height="5" viewBox="0 0 8 5" style="left:1281px;top:177px"><path d="M0 0H8L4 4.6Z" fill="#606060"/></svg>
<!-- ================= SHEET TABS / SCROLLBAR ================= -->
<div id="tabbar" class="a"></div>
<!-- horizontal scrollbar -->
<div class="a" style="left:39px;top:686px;width:35px;height:13px;background:#d6d6d6"></div>
<div class="a box" style="left:24px;top:685px;width:15px;height:15px;border-color:#ababab"></div>
<svg width="4" height="7" viewBox="0 0 4 7" style="left:29px;top:689px"><path d="M4 0V7L0 3.5Z" fill="#606060"/></svg>
<div class="a box" style="left:73px;top:685px;width:442px;height:15px;border-color:#ababab"></div>
<div class="a box" style="left:515px;top:685px;width:15px;height:15px;border-color:#ababab"></div>
<svg width="4" height="7" viewBox="0 0 4 7" style="left:521px;top:689px"><path d="M0 0V7L4 3.5Z" fill="#606060"/></svg>
<svg width="3" height="11" viewBox="0 0 3 11" style="left:545px;top:687px"><rect x="0.4" y="0.5" width="1.8" height="1.8" fill="#a0a0a0"/><rect x="0.4" y="4.6" width="1.8" height="1.8" fill="#a0a0a0"/><rect x="0.4" y="8.7" width="1.8" height="1.8" fill="#a0a0a0"/></svg>
<!-- new sheet -->
<svg width="18" height="18" viewBox="0 0 18 18" style="left:839px;top:683px"><circle cx="9" cy="9" r="7.6" fill="none" stroke="#777" stroke-width="1.1"/><path d="M9 5.2V12.8M5.2 9H12.8" stroke="#666" stroke-width="1.6"/></svg>
<!-- tab separators -->
<div class="a" style="left:891px;top:682px;width:1px;height:20px;background:#ababab"></div>
<div class="a" style="left:984px;top:682px;width:1px;height:20px;background:#ababab"></div>
<div class="a" style="left:1095px;top:682px;width:1px;height:20px;background:#ababab"></div>
<div class="a" style="left:1145px;top:682px;width:1px;height:20px;background:#ababab"></div>
<!-- active tab -->
<div class="a" style="left:1210px;top:679px;width:54px;height:22px;background:#fff;border-left:1px solid #ababab;border-right:1px solid #ababab;border-bottom:2px solid #217346;box-sizing:content-box"></div>
<!-- tab nav arrows -->
<svg width="4" height="7" viewBox="0 0 4 7" style="left:1306px;top:688px"><path d="M4 0V7L0 3.5Z" fill="#c6c6c6"/></svg>
<svg width="4" height="7" viewBox="0 0 4 7" style="left:1334px;top:688px"><path d="M0 0V7L4 3.5Z" fill="#c6c6c6"/></svg>

<!-- ================= STATUS BAR ================= -->
<div id="status" class="a"></div>
<!-- macro record -->
<svg width="14" height="13" viewBox="0 0 14 13" style="left:58px;top:710px"><rect x="2.5" y="2.5" width="11" height="10" fill="#fff" stroke="#7a7a7a" stroke-width="1"/><rect x="2" y="2" width="12" height="3.6" fill="#7a7a7a"/><path d="M4.4 7.3H6.6M7.4 7.3H9.6M10.4 7.3H12.2M4.4 9.7H6.6M7.4 9.7H9.6M10.4 9.7H12.2" stroke="#7a7a7a" stroke-width="1.3"/><circle cx="3.2" cy="3.2" r="3.2" fill="#8c8c8c" stroke="#f3f3f3" stroke-width="0.7"/></svg>
<!-- view buttons -->
<div class="a" style="left:1074px;top:707px;width:38px;height:21px;background:#c9c9c9"></div>
<svg width="14" height="13" viewBox="0 0 14 13" style="left:1086px;top:710px"><rect x="0.5" y="0.5" width="13" height="12" fill="none" stroke="#777" stroke-width="1"/><path d="M0.5 4.5H13.5M0.5 8.5H13.5M4.8 0.5V12.5M9.2 0.5V12.5" stroke="#777" stroke-width="1"/></svg>
<svg width="14" height="13" viewBox="0 0 14 13" style="left:1124px;top:710px"><rect x="0.5" y="0.5" width="13" height="12" fill="none" stroke="#777" stroke-width="1"/><rect x="3.5" y="3.5" width="7" height="6" fill="none" stroke="#777" stroke-width="1"/><path d="M5 5.5H9M5 7.5H9" stroke="#777" stroke-width="0.8"/></svg>
<svg width="14" height="13" viewBox="0 0 14 13" style="left:1162px;top:710px"><rect x="0.5" y="0.5" width="13" height="12" fill="none" stroke="#777" stroke-width="1"/><path d="M0.5 6.5H8.5V0.5M4.5 0.5V6.5" fill="none" stroke="#777" stroke-width="1"/></svg>
<!-- zoom slider -->
<div class="a" style="left:1193px;top:716px;width:6px;height:2px;background:#666"></div>
<div class="a" style="left:1203px;top:716px;width:100px;height:1px;background:#a0a0a0"></div>
<div class="a" style="left:1251px;top:711px;width:4px;height:11px;background:#777"></div>
<svg width="9" height="9" viewBox="0 0 9 9" style="left:1306.5px;top:712px"><path d="M4.5 0.4V8.6M0.4 4.5H8.6" stroke="#5e5e5e" stroke-width="2"/></svg>

<!-- ================= TASKBAR ================= -->
<div id="task" class="a"></div>
<div id="search" class="a"></div>
<!-- start -->
<svg width="16" height="16" viewBox="0 0 16 16" style="left:16px;top:740px"><path d="M0 2.3L6.6 1.4V7.6H0ZM7.4 1.3L16 0V7.6H7.4ZM0 8.4H6.6V14.6L0 13.7ZM7.4 8.4H16V16L7.4 14.7Z" fill="#fff"/></svg>
<!-- search icon -->
<svg width="17" height="17" viewBox="0 0 17 17" style="left:60px;top:740px"><circle cx="10.4" cy="6.2" r="5" fill="none" stroke="#1f2a30" stroke-width="1.3"/><path d="M6.8 9.8L0.8 15.8" stroke="#1f2a30" stroke-width="1.5"/></svg>
<!-- turtle -->
<svg width="66" height="36" viewBox="0 0 66 36" style="left:262px;top:731px">
<defs><linearGradient id="sh" x1="0.2" y1="0" x2="0.7" y2="1"><stop offset="0" stop-color="#b9774a"/><stop offset=".35" stop-color="#d8a867"/><stop offset=".7" stop-color="#e3c47c"/><stop offset="1" stop-color="#c08a4c"/></linearGradient>
<radialGradient id="hd" cx="40%" cy="45%" r="70%"><stop offset="0" stop-color="#dccf68"/><stop offset="1" stop-color="#a8953f"/></radialGradient></defs>
<path d="M16 7C16 3 18.5 0.8 21.5 0.8C24.5 0.8 26 3 25 5.6C24 7.6 21 8.8 18.6 9.4Z" fill="#c9955e"/>
<path d="M17 17C15.4 21 15.8 26 17.6 30C19 33 21.4 35.2 23.4 34C24.4 33 23 30 22.6 27C22.2 24 22.6 21 23.4 18.6Z" fill="#c69058"/>
<path d="M17.4 22L22.4 23.2M17 26.4L22.4 27.4M18.6 30.6L23 30.6" stroke="#9b6136" stroke-width="0.9" fill="none"/>
<path d="M51.6 25.4C55 27 58 29.4 60 32C61.2 33.4 63 32.6 62.6 30.6C62 28 59.6 25.8 56.6 24.6Z" fill="#b57640"/>
<path d="M57.6 17.4C60 16.2 63 16.4 64.6 18C64.6 20 62.6 21.4 59.6 21.6Z" fill="#b57640"/>
<path d="M0.6 12.4C1 9 5 7.2 9 7.8C12.4 8.2 15.4 9.4 18.6 10.6L19.6 16C17 17.4 13 18.6 8.4 18.2C4 17.8 0.2 15.8 0.6 12.4Z" fill="url(#hd)"/>
<ellipse cx="6.6" cy="11.6" rx="1.7" ry="1.4" fill="#3d1f22"/>
<path d="M17.6 9.6C18 14 20.6 20.6 26 25.4C32 30.4 42 31.4 50 29.6C55 28.4 58.6 25.4 60 21.6C57 24.6 52 26.6 45 27C36 27.4 28 24 23.6 18C21.4 15 20 11.6 19.6 8.6Z" fill="#ae622e"/>
<path d="M19.6 8.6C21.6 5 27 3 34 3.6C42 4.2 50 8 55 13C57.6 15.6 59.4 18.6 60 21.6C57 24.6 52 26.6 45 27C36 27.4 28 24 23.6 18C21.4 15 20 11.6 19.6 8.6Z" fill="url(#sh)"/>
<path d="M21 9C25 8.4 28 6 29.6 4M29.6 4C34 8 40 9 46 7.4M24 17.6C28 14 30 10 29.6 4M31 23.6C34 18 36 13 35.6 8.4M40 26.4C42 20 43 14 42 8.6M48.6 26.4C50 21 50.4 16 49.6 10.4M55.6 23C56 19.6 55.4 16 54.4 13" stroke="#a5683a" stroke-opacity=".75" stroke-width="1.1" fill="none"/>
</svg>
<!-- task view -->
<svg width="17" height="15" viewBox="0 0 17 15" style="left:352px;top:740px"><path d="M0.6 2.6V0.6H11.4V2.6M0.6 12.4V14.4H11.4V12.4" fill="none" stroke="#fff" stroke-width="1.1"/><rect x="0.6" y="4.2" width="10.8" height="6.6" fill="none" stroke="#fff" stroke-width="1.1"/><path d="M14.6 0V15" stroke="#fff" stroke-width="1.2"/><rect x="13.2" y="4.6" width="3" height="3" fill="#fff"/></svg>
<!-- edge -->
<svg width="26" height="26" viewBox="0 0 26 26" style="left:398px;top:735px">
<defs><linearGradient id="e1" x1="0" y1="0.2" x2="1" y2="0.8"><stop offset="0" stop-color="#2fa8e6"/><stop offset=".45" stop-color="#36c0c9"/><stop offset=".8" stop-color="#55cf72"/><stop offset="1" stop-color="#6fd858"/></linearGradient>
<linearGradient id="e2" x1="0" y1="0" x2="1" y2="1"><stop offset="0" stop-color="#1f8fe0"/><stop offset="1" stop-color="#12509f"/></linearGradient></defs>
<path d="M13 0.6C19.8 0.6 25.4 6 25.4 12.4C25.4 16 22.6 18.6 19.4 18.6C17 18.6 15.6 17.6 15.6 16.4C15.6 15.2 17.2 14.8 17.2 12.6C17.2 10.4 15.4 8.6 12.6 8.6C9 8.6 6.4 11.6 6.4 15.2C6.4 19 8.6 22.4 12 24.4C5.6 24.4 0.6 19.4 0.6 13C0.6 6.2 6.2 0.6 13 0.6Z" fill="url(#e1)"/>
<path d="M0.7 13C0.7 9 4 6.6 8.4 6.6C12.4 6.6 15.4 8.6 16.6 10.8C15.6 9.4 14.2 8.6 12.6 8.6C9 8.6 6.4 11.6 6.4 15.2C6.4 20.4 10.6 25.4 17 25.4C20 25.4 22.4 24 23.8 22C21.6 23 18 23 15.6 21.4C13.6 20 12.6 18 12.8 16C9.6 18 4 18 0.7 13Z" fill="url(#e2)"/>
<path d="M6.4 15.2C6.4 20.4 10.6 25.4 17 25.4C20 25.4 22.4 24 23.8 22C21.6 23 18 23 15.6 21.4C12.4 19.2 12 15.6 13.6 13.6C12 13 6.8 12 6.4 15.2Z" fill="#155bb0"/>
</svg>
<!-- explorer -->
<svg width="23" height="19" viewBox="0 0 23 19" style="left:448.5px;top:738.5px"><path d="M0 1.6C0 0.8 0.6 0.2 1.4 0.2H8L10 2.4H21.6C22.4 2.4 23 3 23 3.8V17.6C23 18.4 22.4 19 21.6 19H1.4C0.6 19 0 18.4 0 17.6Z" fill="#e9b73b"/><rect x="0" y="4" width="23" height="13.4" rx="0.6" fill="#f8d775"/><path d="M4.4 17.4V11.6C4.4 10.8 5 10.4 5.8 10.4H17.2C18 10.4 18.6 10.8 18.6 11.6V17.4H15.4V13.4H7.6V17.4Z" fill="#4a94d8"/><rect x="4.4" y="17.2" width="14.2" height="1.8" fill="#3b79b8"/></svg>
<div class="a" style="left:440px;top:766px;width:40px;height:2px;background:#76b9ed"></div>
<div class="a" style="left:471px;top:766px;width:9px;height:2px;background:#5a8fb9"></div>
<!-- store -->
<svg width="24" height="25" viewBox="0 0 24 25" style="left:497px;top:736px"><path d="M7.4 6.4V3.4C7.4 2 8.4 1 9.8 1H14.2C15.6 1 16.6 2 16.6 3.4V6.4" fill="none" stroke="#3a96dd" stroke-width="1.6"/><path d="M0.4 6.4H23.6V21C23.6 23 22.4 24.4 20.4 24.4H3.6C1.6 24.4 0.4 23 0.4 21Z" fill="#f4f4f4"/><rect x="7" y="10" width="4.6" height="4.6" fill="#f25022"/><rect x="12.4" y="10" width="4.6" height="4.6" fill="#7fba00"/><rect x="7" y="15.4" width="4.6" height="4.6" fill="#00a4ef"/><rect x="12.4" y="15.4" width="4.6" height="4.6" fill="#ffb900"/></svg>
<!-- photoshop -->
<svg width="22" height="22" viewBox="0 0 22 22" style="left:547px;top:736px"><defs><linearGradient id="ps" x1="0" y1="0" x2="0" y2="1"><stop offset="0" stop-color="#1560b4"/><stop offset="1" stop-color="#093a80"/></linearGradient></defs><rect x="0" y="0" width="22" height="22" rx="1" fill="url(#ps)"/><rect x="0" y="0" width="22" height="1.2" fill="#5aa7ee"/><text x="11" y="15.6" font-family="Liberation Sans, DejaVu Sans, sans-serif" font-size="12.5" font-weight="bold" fill="#7cc4ff" text-anchor="middle">Ps</text></svg>
<!-- excel (active) -->
<div class="a" style="left:583px;top:728px;width:48px;height:40px;background:rgba(255,255,255,0.2)"></div>
<div class="a" style="left:583px;top:766px;width:48px;height:2px;background:#76b9ed"></div>
<svg width="23" height="22" viewBox="0 0 23 22" style="left:595px;top:737px"><rect x="11" y="3" width="11.4" height="16" fill="#fff" stroke="#e8f3ec" stroke-width="0.8"/><path d="M12 6.2H21.4M12 9.4H21.4M12 12.6H21.4M12 15.8H21.4M16.8 3V19" stroke="#2c8a55" stroke-width="1"/><path d="M0 2.4L13 0V22L0 19.6Z" fill="#1f7a45"/><text x="6.6" y="15.4" font-family="Liberation Sans, DejaVu Sans, sans-serif" font-size="11.5" font-weight="bold" fill="#fff" text-anchor="middle">X</text></svg>
<!-- yellow diamond -->
<svg width="24" height="24" viewBox="0 0 24 24" style="left:1000px;top:735.5px"><path d="M12 1L23 12L12 23L1 12Z" fill="#f6b51c" stroke="#f6b51c" stroke-width="1.6" stroke-linejoin="round"/><path d="M12 5L19 12L12 19L5 12Z" fill="#fbd04e"/><circle cx="12" cy="12" r="4.2" fill="#5b4a2a"/><rect x="9.6" y="11.2" width="4.8" height="1.6" fill="#f6d57a"/></svg>
<!-- tray chevron -->
<svg width="13" height="8" viewBox="0 0 13 8" style="left:1194.5px;top:744px"><path d="M0.6 7.2L6.5 1L12.4 7.2" fill="none" stroke="#fff" stroke-width="1.2"/></svg>
<!-- notification -->
<svg width="18" height="17" viewBox="0 0 18 17" style="left:1324.5px;top:740px"><path d="M0.6 0.6H16.4V11.6H8.6L4.6 15.6V11.6H0.6Z" fill="#fff"/><path d="M3.4 3.8H13.6M3.4 6.2H13.6M3.4 8.6H9.4" stroke="#1c2b46" stroke-width="1"/><circle cx="14" cy="12.6" r="2.9" fill="#1c2b46" stroke="#fff" stroke-width="1.1"/><path d="M12.6 14L15.4 11.2" stroke="#fff" stroke-width="1"/></svg>
<!-- show desktop separator -->
<div class="a" style="left:1361px;top:728px;width:1px;height:40px;background:#6d7687"></div>

<!-- ================= TEXT ================= -->
<div class="t" style='top:11px;font-family:"Liberation Sans","DejaVu Sans",sans-serif;font-size:12px;line-height:12px;color:#ffffff;left:555.00px;letter-spacing:-0.044px;'>9-inventory_2 - Excel (Product Activation Failed)</div>
<div class="t" style='top:40px;font-family:"Liberation Sans","DejaVu Sans",sans-serif;font-size:12px;line-height:12px;color:#ffffff;left:20.50px;letter-spacing:-0.615px;'>File</div>
<div class="t" style='top:40px;font-family:"Liberation Sans","DejaVu Sans",sans-serif;font-size:12px;line-height:12px;color:#ffffff;left:76.00px;letter-spacing:0.328px;'>Home</div>
<div class="t" style='top:40px;font-family:"Liberation Sans","DejaVu Sans",sans-serif;font-size:12px;line-height:12px;color:#ffffff;left:138.00px;letter-spacing:-0.203px;'>Insert</div>
<div class="t" style='top:40px;font-family:"Liberation Sans","DejaVu Sans",sans-serif;font-size:12px;line-height:12px;color:#ffffff;left:196.00px;letter-spacing:-0.289px;'>Page Layout</div>
<div class="t" style='top:40px;font-family:"Liberation Sans","DejaVu Sans",sans-serif;font-size:12px;line-height:12px;color:#ffffff;left:290.00px;letter-spacing:-0.145px;'>Formulas</div>
<div class="t" style='top:40px;font-family:"Liberation Sans","DejaVu Sans",sans-serif;font-size:12px;line-height:12px;color:#ffffff;left:368.00px;letter-spacing:-0.453px;'>Data</div>
<div class="t" style='top:40px;font-family:"Liberation Sans","DejaVu Sans",sans-serif;font-size:12px;line-height:12px;color:#ffffff;left:421.00px;letter-spacing:-0.472px;'>Review</div>
<div class="t" style='top:40px;font-family:"Liberation Sans","DejaVu Sans",sans-serif;font-size:12px;line-height:12px;color:#ffffff;left:487.00px;letter-spacing:-0.266px;'>View</div>
<div class="t" style='top:40px;font-family:"Liberation Sans","DejaVu Sans",sans-serif;font-size:12px;line-height:12px;color:#ffffff;left:541.00px;letter-spacing:-0.213px;'>Developer</div>
<div class="t" style='top:40px;font-family:"Liberation Sans","DejaVu Sans",sans-serif;font-size:12px;line-height:12px;color:#a6c7b4;left:640.00px;letter-spacing:0.031px;'>Tell me what you want to do...</div>
<div class="t" style='top:39px;font-family:"Liberation Sans","DejaVu Sans",sans-serif;font-size:12px;line-height:12px;color:#ffffff;left:1318.00px;letter-spacing:-0.633px;'>Share</div>
<div class="t" style='top:73px;font-family:"Liberation Sans","DejaVu Sans",sans-serif;font-size:12px;line-height:12px;color:#3b3a30;left:40.00px;letter-spacing:-0.556px;'>SECURITY WARNING</div>
<div class="t" style='top:73px;font-family:"Liberation Sans","DejaVu Sans",sans-serif;font-size:12px;line-height:12px;color:#3b3a30;left:163.00px;letter-spacing:-0.020px;'>Automatic update of links has been disabled</div>
<div class="t" style='top:73px;font-family:"Liberation Sans","DejaVu Sans",sans-serif;font-size:12px;line-height:12px;color:#3b3a30;left:434.00px;letter-spacing:-0.133px;'>Enable Content</div>
<div class="t" style='top:111px;font-family:"Liberation Sans","DejaVu Sans",sans-serif;font-size:12px;line-height:12px;color:#444;left:12.50px;letter-spacing:0.312px;'>B2</div>
<div class="t" style='top:110px;font-family:"Liberation Serif","DejaVu Serif",serif;font-size:14px;line-height:14px;color:#555;font-weight:bold;font-style:italic;left:222.00px;'>fx</div>
<div class="t" dir="rtl" style='top:108px;font-family:"DejaVu Sans","Liberation Sans",sans-serif;font-size:14px;line-height:14px;color:#444;left:1247.50px;width:98.78px;transform:scaleX(0.9162);transform-origin:0 0;'>منتجات بلاستيكية</div>
<div class="t" dir="rtl" style='top:687px;font-family:"DejaVu Sans","Liberation Sans",sans-serif;font-size:12.5px;line-height:12.5px;color:#444;left:905.00px;width:69.06px;transform:scaleX(0.9846);transform-origin:0 0;'>مطابقه الجرد</div>
<div class="t" dir="rtl" style='top:687px;font-family:"DejaVu Sans","Liberation Sans",sans-serif;font-size:12.5px;line-height:12.5px;color:#444;left:998.00px;width:87.81px;transform:scaleX(0.9851);transform-origin:0 0;'>الوارد والمنصرف</div>
<div class="t" dir="rtl" style='top:687px;font-family:"DejaVu Sans","Liberation Sans",sans-serif;font-size:12.5px;line-height:12.5px;color:#444;left:1109.00px;width:27.08px;transform:scaleX(0.9417);transform-origin:0 0;'>تقرير</div>
<div class="t" style='top:687px;font-family:"Liberation Sans","DejaVu Sans",sans-serif;font-size:12.5px;line-height:12.5px;color:#222;font-weight:bold;left:1159.00px;letter-spacing:-0.100px;'>Sheet1</div>
<div class="t" dir="rtl" style='top:687px;font-family:"DejaVu Sans","Liberation Sans",sans-serif;font-size:12.5px;line-height:12.5px;color:#217346;left:1225.00px;width:30.89px;transform:scaleX(0.9550);transform-origin:0 0;'>الدليل</div>
<div class="t" style='top:711px;font-family:"Liberation Sans","DejaVu Sans",sans-serif;font-size:12px;line-height:12px;color:#444;left:7.50px;letter-spacing:-1.047px;'>Ready</div>
<div class="t" style='top:711px;font-family:"Liberation Sans","DejaVu Sans",sans-serif;font-size:12px;line-height:12px;color:#444;left:1330.50px;letter-spacing:-1.200px;'>100%</div>
<div class="t" style='top:741px;font-family:"Liberation Sans","DejaVu Sans",sans-serif;font-size:15px;line-height:15px;color:#2b3a42;left:88.00px;letter-spacing:-0.282px;'>Type here to search</div>
<div class="t" dir="rtl" style='top:741px;font-family:"DejaVu Sans","Liberation Sans",sans-serif;font-size:14.5px;line-height:14.5px;color:#ffffff;left:1032.50px;width:149.41px;transform:scaleX(0.9069);transform-origin:0 0;'>منشارع السادات الواقي‍...</div>
<div class="t" style='top:742px;font-family:"Liberation Sans","DejaVu Sans",sans-serif;font-size:12px;line-height:12px;color:#ffffff;left:1219.00px;letter-spacing:-1.200px;'>ENG</div>
<div class="t" style='top:733px;font-family:"Liberation Sans","DejaVu Sans",sans-serif;font-size:12px;line-height:12px;color:#ffffff;left:1260.00px;letter-spacing:-0.451px;'>6:50 PM</div>
<div class="t" style='top:751px;font-family:"Liberation Sans","DejaVu Sans",sans-serif;font-size:12px;line-height:12px;color:#ffffff;left:1255.00px;letter-spacing:-0.174px;'>6/16/2023</div>
<div class="t" style='top:654px;font-family:"Liberation Sans","DejaVu Sans",sans-serif;font-size:18px;line-height:18px;color:rgba(120,120,120,0.45);left:1073.50px;letter-spacing:0.929px;z-index:50;'>Activate Windows</div>
<div class="t" style='top:678px;font-family:"Liberation Sans","DejaVu Sans",sans-serif;font-size:14px;line-height:14px;color:rgba(120,120,120,0.45);left:1073.50px;letter-spacing:0.338px;z-index:50;'>Go to Settings to activate Windows.</div>
<div class="t" style='top:725px;font-family:"Liberation Sans","DejaVu Sans",sans-serif;font-size:26.5px;line-height:26.5px;color:rgba(190,190,190,0.45);font-weight:bold;left:601.00px;letter-spacing:0.055px;z-index:50;'>mostaql.com</div>
<div class="t" dir="rtl" style='top:679px;font-family:"DejaVu Sans","Liberation Sans",sans-serif;font-size:52px;line-height:52px;color:rgba(190,190,190,0.45);font-weight:bold;left:601.00px;width:190.19px;transform:scaleX(0.8623);transform-origin:0 0;z-index:50;clip-path:inset(0 0 3px 0);'>مستقل</div>
</body>
</html>
